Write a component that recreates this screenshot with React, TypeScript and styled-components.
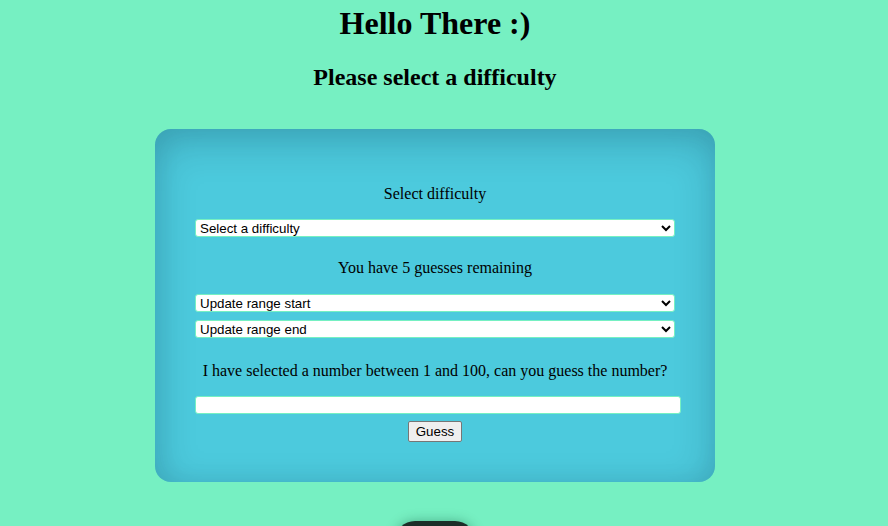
import React from "react";
import styled, { createGlobalStyle } from "styled-components";

const Global = createGlobalStyle`
  html, body {
    margin: 0;
    padding: 0;
    background: #76f0c2;
    overflow: hidden;
  }
  body {
    font-family: "Liberation Serif", "Times New Roman", serif;
    color: #000;
  }
`;

const Page = styled.div`
  width: 870px;
  display: flex;
  flex-direction: column;
  align-items: center;
`;

const Title = styled.h1`
  margin: 5px 0 0;
  font-size: 32px;
  font-weight: bold;
`;

const Subtitle = styled.h2`
  margin: 22px 0 0;
  font-size: 24px;
  font-weight: bold;
`;

const Card = styled.div`
  box-sizing: border-box;
  width: 560px;
  margin-top: 38px;
  padding: 40px;
  border-radius: 16px;
  background: #4ccadd;
  box-shadow: inset 0 12px 40px rgba(0, 30, 50, 0.22),
    inset 4px 0 24px rgba(0, 30, 50, 0.06);
  display: flex;
  flex-direction: column;
  align-items: center;
`;

const Text = styled.p<{ $top: number }>`
  margin: ${(p) => p.$top}px 0 0;
  font-size: 16px;
  line-height: 18px;
  text-align: center;
`;

const Select = styled.select<{ $top: number }>`
  box-sizing: border-box;
  width: 480px;
  height: 18px;
  margin: ${(p) => p.$top}px 0 0;
  padding: 0;
  align-self: flex-start;
  font-family: "Liberation Sans", Arial, sans-serif;
  font-size: 13.33px;
  color: #000;
  background: #fff;
  border: 1px solid #76f0c2;
  border-radius: 3px;
`;

const Input = styled.input`
  box-sizing: border-box;
  width: 486px;
  height: 18px;
  margin-top: 16px;
  align-self: flex-start;
  background: #fff;
  border: 1px solid #76f0c2;
  border-radius: 3px;
  font-family: "Liberation Sans", Arial, sans-serif;
  font-size: 13.33px;
`;

const GuessButton = styled.button`
  box-sizing: border-box;
  margin-top: 7px;
  height: 21px;
  width: 54px;
  padding: 1px 6px;
  font-family: "Liberation Sans", Arial, sans-serif;
  font-size: 13.33px;
  color: #000;
  background: #efefef;
  border: 1px solid #767676;
  border-radius: 2px;
`;

const DarkButton = styled.button`
  margin-top: 39px;
  width: 80px;
  height: 40px;
  border: none;
  border-radius: 20px;
  background: #1b2e28;
  box-shadow: 0 0 12px rgba(0, 60, 40, 0.35);
`;

export default function App() {
  return (
    <>
      <Global />
      <Page>
        <Title>Hello There :)</Title>
        <Subtitle>Please select a difficulty</Subtitle>
        <Card>
          <Text $top={16}>Select difficulty</Text>
          <Select $top={16} defaultValue="">
            <option value="">Select a difficulty</option>
            <option value="easy">Easy</option>
            <option value="medium">Medium</option>
            <option value="hard">Hard</option>
          </Select>
          <Text $top={22}>You have 5 guesses remaining</Text>
          <Select $top={17} defaultValue="">
            <option value="">Update range start</option>
          </Select>
          <Select $top={8} defaultValue="">
            <option value="">Update range end</option>
          </Select>
          <Text $top={24}>
            I have selected a number between 1 and 100, can you guess the number?
          </Text>
          <Input type="text" />
          <GuessButton>Guess</GuessButton>
        </Card>
        <DarkButton aria-label="action" />
      </Page>
    </>
  );
}
